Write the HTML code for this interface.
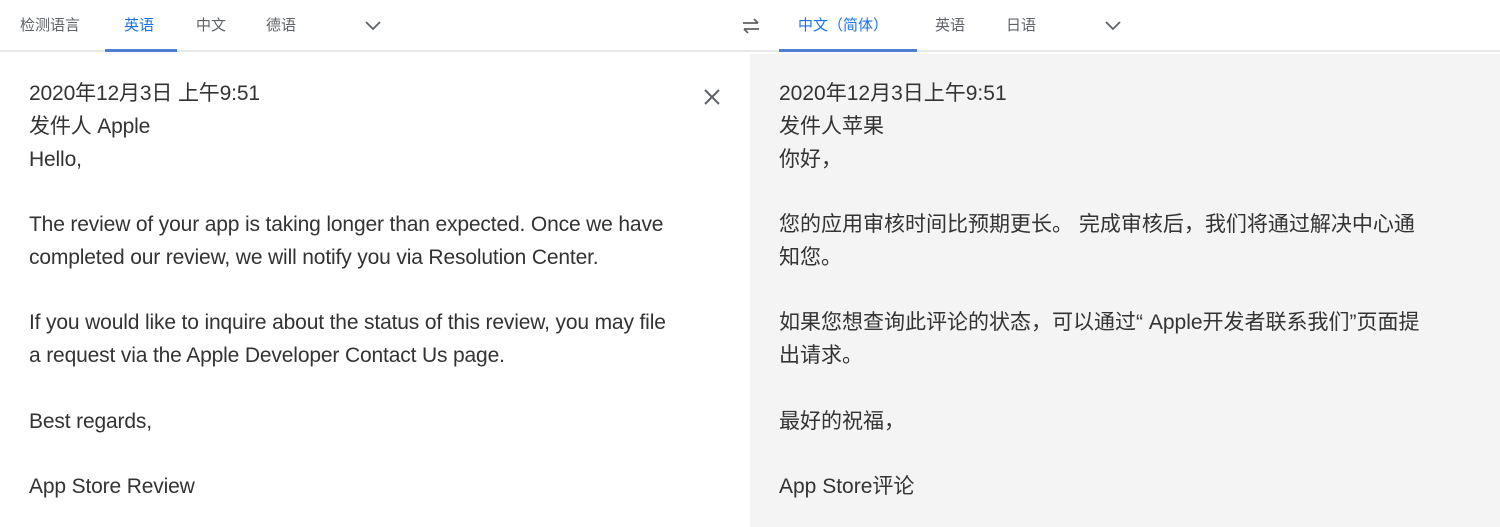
<!DOCTYPE html>
<html><head><meta charset="utf-8"><style>
*{margin:0;padding:0;box-sizing:border-box}
body{width:1500px;height:527px;overflow:hidden;background:#fff;font-family:"Liberation Sans","Noto Sans CJK SC",sans-serif;position:relative}
.hdr{position:absolute;top:0;left:0;width:1500px;height:52px;background:#fff;border-bottom:2px solid #e8e8e8}
.tab{position:absolute;top:15px;font-size:15px;color:#5f6368;line-height:22px}
.act{color:#1a73e8}
.ul{position:absolute;top:49px;height:3px;background:#4a7fd4}
.rp{position:absolute;left:750px;top:54px;width:750px;height:473px;background:#f4f4f4}
.txt{position:absolute;top:78px;font-size:21px;line-height:32.75px;color:#333;white-space:pre}
</style></head><body>
<div class="hdr">
<span class="tab" style="left:20px">检测语言</span>
<span class="tab act" style="left:124px">英语</span>
<span class="tab" style="left:196px">中文</span>
<span class="tab" style="left:266px">德语</span>
<svg style="position:absolute;left:364px;top:18px" width="18" height="14"><path d="M2 4l7 7 7-7" stroke="#5f6368" stroke-width="1.8" fill="none"/></svg>
<svg style="position:absolute;left:739px;top:16px" width="24" height="20"><path d="M4 7h15M15 3l4 4M20 13H5M9 17l-4-4" stroke="#5f6368" stroke-width="1.8" fill="none"/></svg>
<span class="tab act" style="left:798px">中文（简体）</span>
<span class="tab" style="left:935px">英语</span>
<span class="tab" style="left:1006px">日语</span>
<svg style="position:absolute;left:1104px;top:18px" width="18" height="14"><path d="M2 4l7 7 7-7" stroke="#5f6368" stroke-width="1.8" fill="none"/></svg>
<div class="ul" style="left:105px;width:72px"></div>
<div class="ul" style="left:779px;width:138px"></div>
</div>
<div class="rp"></div>
<svg style="position:absolute;left:702px;top:87px" width="20" height="20"><path d="M3 3l14 14M17 3L3 17" stroke="#5f6368" stroke-width="2" fill="none"/></svg>
<div class="txt" style="left:29px;letter-spacing:-0.15px">2020年12月3日 上午9:51
发件人 Apple
Hello,

The review of your app is taking longer than expected. Once we have
completed our review, we will notify you via Resolution Center.

If you would like to inquire about the status of this review, you may file
a request via the Apple Developer Contact Us page.

Best regards,

App Store Review</div>
<div class="txt" style="left:779px">2020年12月3日上午9:51
发件人苹果
你好，

您的应用审核时间比预期更长。 完成审核后，我们将通过解决中心通
知您。

如果您想查询此评论的状态，可以通过“ Apple开发者联系我们”页面提
出请求。

最好的祝福，

App Store评论</div>
</body></html>
